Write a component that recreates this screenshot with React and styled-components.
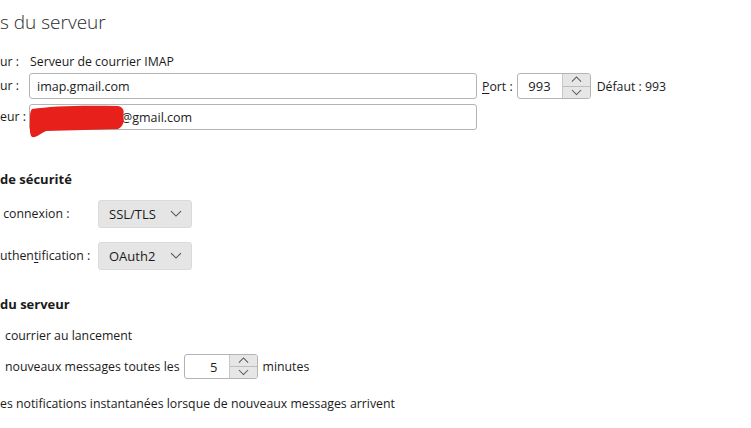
import React from 'react';
import styled, { createGlobalStyle } from 'styled-components';

const Global = createGlobalStyle`
  html, body { margin: 0; padding: 0; background: #fff; }
  body {
    font-family: "Open Sans", "Noto Sans", sans-serif;
    font-size: 12.3px;
    color: #1b1b1b;
    overflow: hidden;
  }
`;

const Page = styled.div`
  width: 751px;
  height: 428px;
  overflow: hidden;
  box-sizing: border-box;
  padding-top: 8px;
`;

const Title = styled.h1`
  margin: 0;
  font-size: 19px;
  font-weight: 300;
  color: #2b2b2b;
  line-height: 28px;
`;

const ServerGrid = styled.div`
  display: grid;
  grid-template-columns: 29px 448px auto;
  grid-template-rows: 16px 26px 26px;
  align-items: center;
  row-gap: 5px;
  margin-top: 16px;
`;

const Label = styled.span`
  white-space: nowrap;
  line-height: 18px;
`;

const Value = styled.span`
  padding-left: 1px;
  padding-top: 3px;
  line-height: 18px;
`;

const TextBox = styled.div`
  position: relative;
  box-sizing: border-box;
  height: 26px;
  border: 1px solid #b4b4b4;
  border-radius: 3px;
  display: flex;
  align-items: center;
  padding-left: 7px;
  background: #fff;
  font-size: 12.5px;
`;

const PortGroup = styled.div`
  display: flex;
  align-items: center;
  margin-left: 5px;
  gap: 4px;
`;

const Underlined = styled.span`
  text-decoration: underline;
  text-underline-offset: 2px;
`;

const SpinBox = styled.div`
  box-sizing: border-box;
  display: flex;
  width: ${(p) => p.$width}px;
  height: ${(p) => p.$height}px;
  border: 1px solid #b4b4b4;
  border-radius: 3px;
  overflow: hidden;
  margin-left: ${(p) => p.$gap || 0}px;
`;

const SpinValue = styled.div`
  flex: 1;
  display: flex;
  align-items: center;
  justify-content: flex-end;
  padding-right: 11px;
  font-size: 13px;
`;

const SpinButtons = styled.div`
  width: 27px;
  display: flex;
  flex-direction: column;
  background: #e6e6e6;
  border-left: 1px solid #c8c8c8;
`;

const SpinBtn = styled.div`
  flex: 1;
  display: flex;
  align-items: center;
  justify-content: center;
  & + & { border-top: 1px solid #bdbdbd; }
`;

const Scribble = styled.svg`
  position: absolute;
  left: -2px;
  top: -1px;
  pointer-events: none;
`;

const Heading = styled.h2`
  margin: 0;
  font-size: 13px;
  font-weight: 700;
  line-height: 20px;
  color: #1b1b1b;
`;

const SecurityGrid = styled.div`
  display: grid;
  grid-template-columns: 98px 94px;
  align-items: center;
  row-gap: 14px;
  margin-top: 11px;
`;

const Select = styled.div`
  box-sizing: border-box;
  height: 28px;
  background: #e5e5e5;
  border: 1px solid #dadada;
  border-radius: 3px;
  display: flex;
  align-items: center;
  justify-content: space-between;
  padding: 0 9px 0 10px;
  font-size: 13px;
`;

const Line = styled.div`
  display: flex;
  align-items: center;
  white-space: nowrap;
  padding-left: ${(p) => p.$indent || 0}px;
  margin-top: ${(p) => p.$top || 0}px;
  line-height: 18px;
`;

const Chevron = ({ up, size = 12 }) => (
  <svg width={size} height={size * 0.6} viewBox="0 0 12 7">
    <path
      d={up ? 'M1 6 L6 1 L11 6' : 'M1 1 L6 6 L11 1'}
      fill="none"
      stroke="#555"
      strokeWidth="1.1"
    />
  </svg>
);

const Spinner = ({ value, width, height, gap }) => (
  <SpinBox $width={width} $height={height} $gap={gap}>
    <SpinValue>{value}</SpinValue>
    <SpinButtons>
      <SpinBtn><Chevron up size={11} /></SpinBtn>
      <SpinBtn><Chevron size={11} /></SpinBtn>
    </SpinButtons>
  </SpinBox>
);

export default function App() {
  return (
    <Page>
      <Global />
      <Title>s du serveur</Title>

      <ServerGrid>
        <Label style={{ paddingTop: 3 }}>ur :</Label>
        <Value>Serveur de courrier IMAP</Value>
        <span />

        <Label>ur :</Label>
        <TextBox>imap.gmail.com</TextBox>
        <PortGroup>
          <span><Underlined>P</Underlined>ort :</span>
          <Spinner value="993" width={74} height={26} />
          <span style={{ marginLeft: 2 }}>Défaut : 993</span>
        </PortGroup>

        <Label>eur :</Label>
        <TextBox>
          <span style={{ paddingLeft: 84 }}>@gmail.com</span>
          <Scribble width="98" height="36" viewBox="0 0 98 36">
            <path
              d="M4 5 C22 2 55 1 90 2 C95 3 97 7 95 11 C97 17 95 23 90 25 C70 26 42 26 18 27 C12 30 8 34 4 33 C1 30 2 22 2 15 C2 10 2 7 4 5 Z"
              fill="#e8201c"
            />
          </Scribble>
        </TextBox>
      </ServerGrid>

      <Heading style={{ marginTop: 39 }}>de sécurité</Heading>
      <SecurityGrid>
        <Label>&nbsp;connexion :</Label>
        <Select>SSL/TLS <Chevron /></Select>
        <Label>uthen<Underlined>t</Underlined>ification :</Label>
        <Select>OAuth2 <Chevron /></Select>
      </SecurityGrid>

      <Heading style={{ marginTop: 24 }}>du serveur</Heading>
      <Line $indent={5} $top={13}>courrier au lancement</Line>
      <Line $indent={5} $top={9}>
        nouveaux messages toutes les
        <Spinner value="5" width={74} height={25} gap={4} />
        <span style={{ marginLeft: 5 }}>minutes</span>
      </Line>
      <Line $top={16}>es notifications instantanées lorsque de nouveaux messages arrivent</Line>
    </Page>
  );
}
